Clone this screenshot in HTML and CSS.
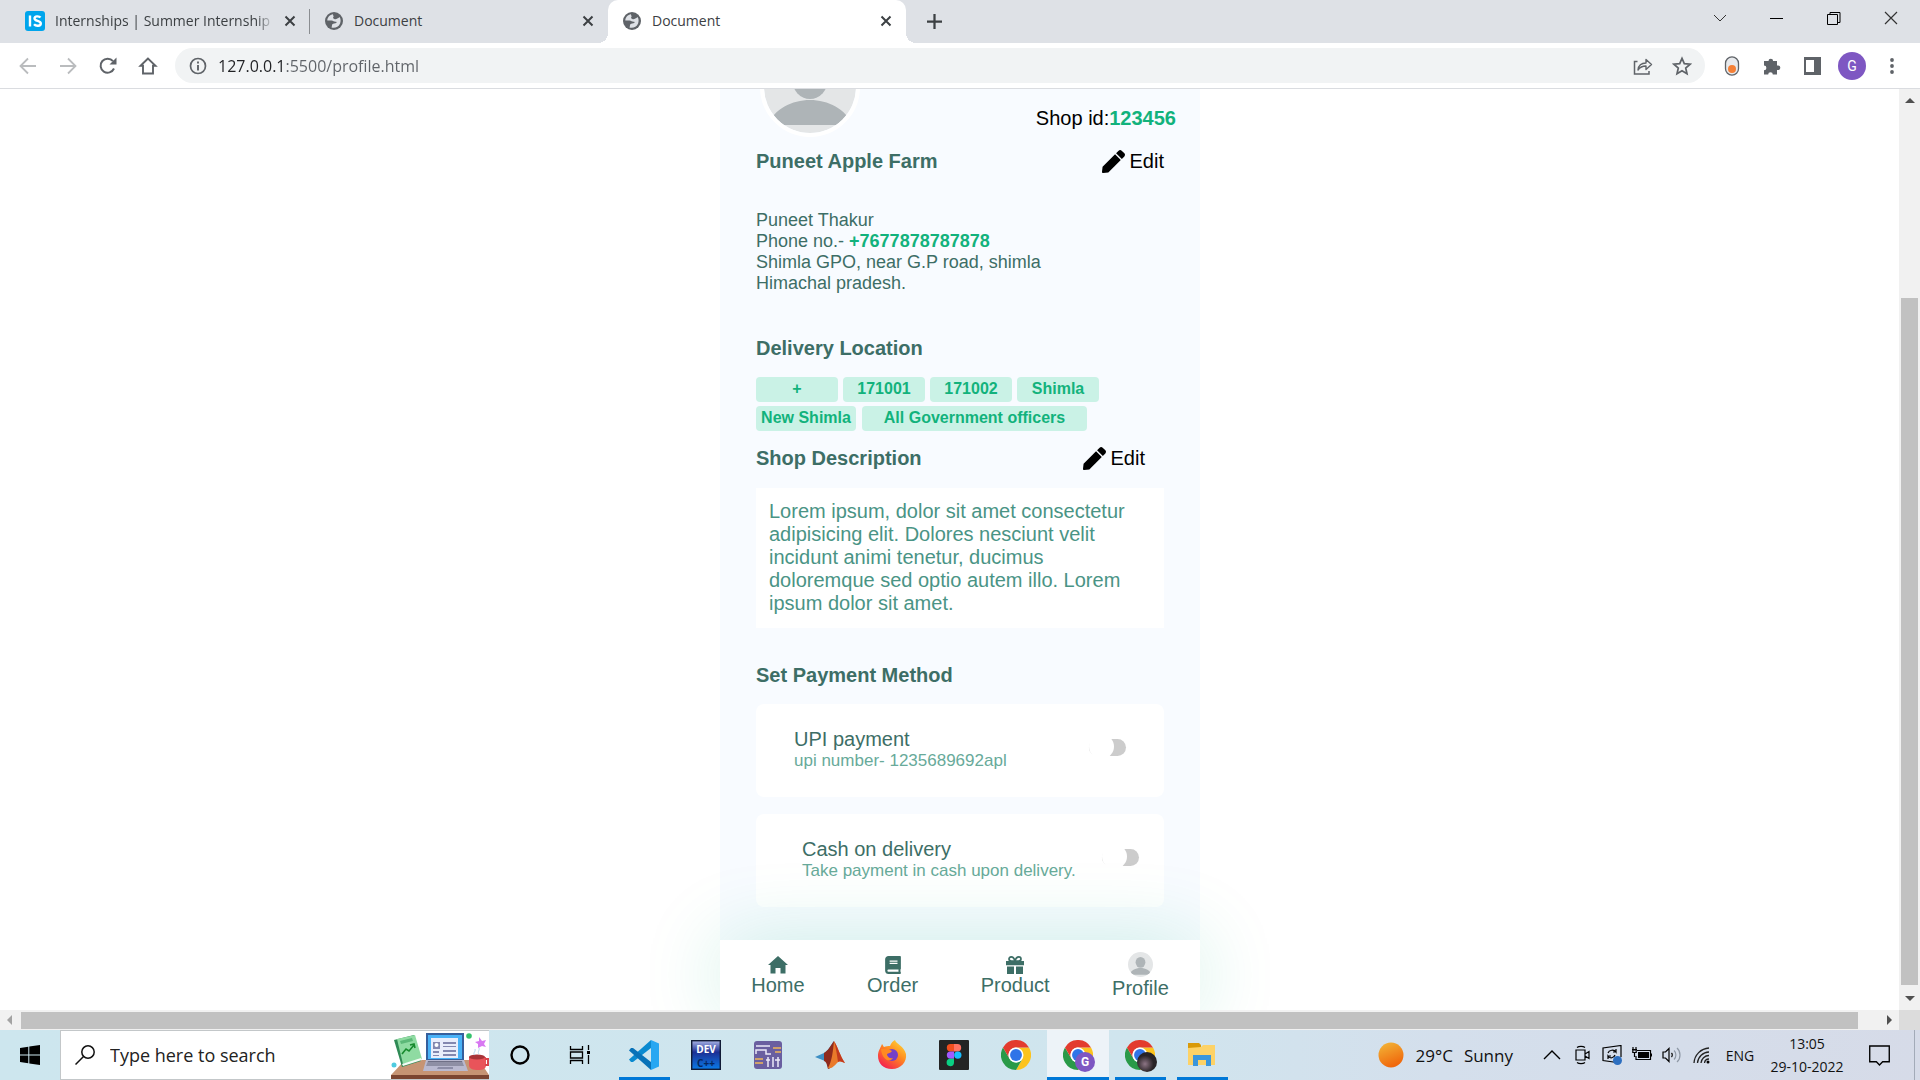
FILE: index.html
```html
<!DOCTYPE html>
<html lang="en">
<head>
<meta charset="utf-8">
<title>Document</title>
<link rel="stylesheet" href="styles.css">
</head>
<body>
<svg class="defs" aria-hidden="true">
  <symbol id="globe" viewBox="0 0 18 18"><circle cx="9" cy="9" r="9" fill="#5f6368"/><path d="M8 2.2c-3 .4-5.700 3-5.700 6.300l4.200.1c1.800.1 2.500 1.300 4.200 1.200 1 0 1.200.7.5 1.300-1 .7-3 .2-3.800 1.100-.6.7-.3 1.900-.9 3.200 3 1 7-.2 8.600-4 .9-2.300.6-4.700-.6-6.300-.6.9-1.600 1-2.200 1.500-.9.700-2 .9-3 .5-1.300-.5-1.600-1.500-.8-2.300.6-.6-.7-1.500-.5-2.600z" fill="#dee1e6"/></symbol>
  <symbol id="x" viewBox="0 0 12 12"><path d="M1.500 1.500l9 9M10.500 1.500l-9 9" stroke="#3c4043" stroke-width="2" fill="none"/></symbol>
  <symbol id="pen" viewBox="0 0 512 512"><path d="M290.74 93.24l128.02 128.02-277.99 277.99-114.14 12.6C11.35 513.54-1.56 500.620.14 485.340l12.7-114.22 277.9-277.880zm207.2-19.060l-60.110-60.110c-18.750-18.750-49.160-18.750-67.920 0l-56.550 56.550 128.020 128.020 56.550-56.550c18.750-18.760 18.750-49.160 0-67.910z"/></symbol>
  <symbol id="avatar" viewBox="4 4 92 92">
    <clipPath id="ring"><circle cx="50" cy="50" r="46"/></clipPath>
    <g clip-path="url(#ring)"><path d="M0 0h100v100H0z" fill="#e4e6e7"/><ellipse cx="50" cy="42" rx="18" ry="20" fill="#aeb4b7"/><path d="M8 88C14 72 32 63 50 63s36 9 42 25z" fill="#aeb4b7"/></g>
  </symbol>
  <symbol id="chrome" viewBox="0 0 48 48">
    <path d="M24 12h20.800A24 24 0 0 1 24 48l10.400-18z" fill="#fcc31e"/>
    <path d="M24 48A24 24 0 0 1 3.200 12l10.400 18A12 12 0 0 0 34.400 30z" fill="#2a9a48"/>
    <path d="M3.200 12A24 24 0 0 1 44.800 12H24A12 12 0 0 0 13.600 30z" fill="#e33b2e"/>
    <circle cx="24" cy="24" r="12" fill="#fff"/><circle cx="24" cy="24" r="9.500" fill="#2f74e8"/>
  </symbol>
</svg>

<header class="tabs">
  <div class="tab tab-first">
    <svg class="fav-is" viewBox="0 0 20 20" aria-hidden="true"><rect width="20" height="20" rx="3" fill="#00a5ec"/><path d="M5 4.500v11M15.500 6.500c-1.200-1.500-6-1.800-6 1 0 3 6.300 1.800 6.300 4.900 0 3-5 3-6.800.8" stroke="#fff" stroke-width="2.400" fill="none"/></svg>
    <span class="tab-title fade">Internships | Summer Internship 2022</span>
    <button class="close" aria-label="Close tab"><svg><use href="#x"/></svg></button>
  </div>
  <div class="tab">
    <svg class="fav"><use href="#globe"/></svg>
    <span class="tab-title">Document</span>
    <button class="close" aria-label="Close tab"><svg><use href="#x"/></svg></button>
  </div>
  <div class="tab active">
    <svg class="fav"><use href="#globe"/></svg>
    <span class="tab-title">Document</span>
    <button class="close" aria-label="Close tab"><svg><use href="#x"/></svg></button>
  </div>
  <button class="new-tab" aria-label="New tab"><svg viewBox="0 0 16 16"><path d="M8 0v16M0 8h16" stroke="#3c4043" stroke-width="2.400"/></svg></button>
  <div class="window-controls">
    <button aria-label="Search tabs"><svg viewBox="0 0 14 14"><path d="M1 4l6 6 6-6" fill="none" stroke="#333"/></svg></button>
    <button aria-label="Minimize"><svg viewBox="0 0 14 14"><path d="M0 7.500h13" stroke="#000"/></svg></button>
    <button aria-label="Restore"><svg viewBox="0 0 14 14"><path d="M.5 3.500h10v10H.5zM3 3V1.500h10v10h-2" fill="none" stroke="#000"/></svg></button>
    <button aria-label="Close"><svg viewBox="0 0 14 14"><path d="M1 1l12 12M13 1L1 13" stroke="#333" stroke-width="1.200"/></svg></button>
  </div>
</header>

<div class="toolbar">
  <button class="tool" aria-label="Back"><svg viewBox="0 0 20 20"><path d="M18 10H3M10 2.500L2.500 10l7.500 7.500" fill="none" stroke="#babcbe" stroke-width="1.800"/></svg></button>
  <button class="tool" aria-label="Forward"><svg viewBox="0 0 20 20"><path d="M2 10h15M10 2.500l7.500 7.500-7.500 7.500" fill="none" stroke="#babcbe" stroke-width="1.800"/></svg></button>
  <button class="tool" aria-label="Reload"><svg viewBox="0 0 20 20"><path d="M16 12.500A7 7 0 1 1 15 5.200" fill="none" stroke="#5f6368" stroke-width="2"/><path d="M18.500 1.500v7h-7z" fill="#5f6368"/></svg></button>
  <button class="tool" aria-label="Home"><svg viewBox="0 0 20 20"><path d="M10 2.500l-7.500 7.300H5V17.500h10V9.800h2.500z" fill="none" stroke="#5f6368" stroke-width="1.900"/></svg></button>
  <div class="omnibox">
    <svg viewBox="0 0 20 20" aria-hidden="true"><circle cx="10" cy="10" r="7.500" fill="none" stroke="#5f6368" stroke-width="1.700"/><path d="M10 9v5.500M10 5.500v2" stroke="#5f6368" stroke-width="1.900"/></svg>
    <input class="url" type="text" aria-label="Address" value="127.0.0.1:5500/profile.html">
    <button aria-label="Share"><svg viewBox="0 0 20 20"><path d="M4.500 5.500H1.500V18H16v-3" fill="none" stroke="#5f6368" stroke-width="1.500"/><path d="M5 14c.5-4.500 3.500-7 8-7V3.500l5.500 5-5.500 5V10c-3.500 0-6 1-8 4z" fill="none" stroke="#5f6368" stroke-width="1.400" stroke-linejoin="round"/></svg></button>
    <button aria-label="Bookmark"><svg viewBox="0 0 20 20"><path d="M10 2.300l2.300 5.400 5.800.5-4.400 3.800 1.300 5.700-5-3-5 3 1.300-5.700L1.900 8.200l5.800-.5z" fill="none" stroke="#5f6368" stroke-width="1.700"/></svg></button>
  </div>
  <button class="tool" aria-label="Extension"><svg viewBox="0 0 20 20"><rect x="3.500" y=".8" width="13" height="18.400" rx="6.500" fill="#e8eaed" stroke="#5f6368" stroke-width="1.300"/><circle cx="10" cy="13" r="4" fill="#f58036"/></svg></button>
  <button class="tool" aria-label="Extensions"><svg viewBox="0 0 20 20"><path d="M2 5h4.500a2.300 2.300 0 1 1 4.600 0H15v4.400h1a2.300 2.300 0 0 1 0 4.700h-1V18.500h-4.200a2.300 2.300 0 1 0-4.600 0H2v-4.200a2.400 2.400 0 0 0 0-4.800z" fill="#5f6368"/></svg></button>
  <button class="tool" aria-label="Side panel"><svg viewBox="0 0 20 20"><path d="M2 1h17v18H2z" fill="#5f6368"/><path d="M4 4h8v12H4z" fill="#fff"/></svg></button>
  <button class="tool" aria-label="Account"><span class="account">G</span></button>
  <button class="tool" aria-label="Menu"><svg viewBox="0 0 20 20"><circle cx="10" cy="4" r="1.900" fill="#5f6368"/><circle cx="10" cy="10" r="1.900" fill="#5f6368"/><circle cx="10" cy="16" r="1.900" fill="#5f6368"/></svg></button>
</div>

<div class="viewport">
  <div class="page">
    <main class="phone">
      <div class="shop-head">
        <svg class="photo"><use href="#avatar"/></svg>
        <p class="shop-id">Shop id:<b>123456</b></p>
      </div>
      <section class="content">
        <div class="row">
          <h2>Puneet Apple Farm</h2>
          <button class="edit"><svg><use href="#pen"/></svg>Edit</button>
        </div>
        <address>Puneet Thakur<br>Phone no.- <b>+7677878787878</b><br>Shimla GPO, near G.P road, shimla<br>Himachal pradesh.</address>
        <h2>Delivery Location</h2>
        <div class="chips">
          <button>+</button><button>171001</button><button>171002</button><button>Shimla</button>
        </div>
        <div class="chips second">
          <button class="mid">New Shimla</button><button class="wide">All Government officers</button>
        </div>
        <div class="row about">
          <h2>Shop Description</h2>
          <button class="edit"><svg><use href="#pen"/></svg>Edit</button>
        </div>
        <p class="description">Lorem ipsum, dolor sit amet consectetur adipisicing elit. Dolores nesciunt velit incidunt animi tenetur, ducimus doloremque sed optio autem illo. Lorem ipsum dolor sit amet.</p>
        <h2 class="payment">Set Payment Method</h2>
        <div class="card">
          <label for="upi"><span>UPI payment</span><small>upi number- 1235689692apl</small></label>
          <input class="switch" type="checkbox" id="upi">
        </div>
        <div class="card cash">
          <label for="cod"><span>Cash on delivery</span><small>Take payment in cash upon delivery.</small></label>
          <input class="switch" type="checkbox" id="cod">
        </div>
      </section>
    </main>
    <nav class="bottom-nav">
      <a href="#home"><svg viewBox="0 0 20 18"><path d="M10 0l10 9h-2.500v8.500h-5V12h-5v5.500h-5V9H0z"/></svg>Home</a>
      <a href="#order"><svg viewBox="0 0 448 512"><path d="M448 360V24c0-13.300-10.700-24-24-24H96C43 0 0 43 0 96v320c0 53 43 96 96 96h328c13.300 0 24-10.700 24-24v-16c0-7.500-3.500-14.300-8.900-18.700-4.200-15.400-4.200-59.300 0-74.700 5.400-4.300 8.900-11.100 8.900-18.600zM128 128h224v32H128zM128 192h224v32H128zm253.400 256H96a32 32 0 0 1 0-64h285.400c-1.900 17.100-1.900 46.900 0 64z" fill-rule="evenodd"/></svg>Order</a>
      <a href="#product"><svg viewBox="0 0 18 18"><path d="M9 4.800C8 2 7 .9 5.300.9 3.700.9 3 2 3 3c0 1.200 1 2 2.500 2H9zM9 4.800C10 2 11 .9 12.700.9c1.600 0 2.300 1.100 2.300 2.100 0 1.200-1 2-2.500 2H9z" fill="none" stroke="#3d6e66" stroke-width="1.700"/><path d="M0 5h18v4.200H0zM1 10.500h7V18H1zM10 10.500h7V18h-7z"/></svg>Product</a>
      <a href="#profile" class="me"><svg><use href="#avatar"/></svg>Profile</a>
    </nav>
  </div>
  <div class="vbar"><i class="up"></i><i class="vthumb"></i><i class="down"></i></div>
  <div class="hbar"><i class="left"></i><i class="hthumb"></i><i class="right"></i></div>
  <div class="corner"></div>
</div>

<footer class="taskbar">
  <button class="start" aria-label="Start"><svg viewBox="0 0 20 20"><path d="M0 3l8.300-1.200v7.700H0zM9.300 1.600L20 0v9.500H9.300zM0 10.500h8.300v7.700L0 17zM9.300 10.500H20V20L9.300 18.400z"/></svg></button>
  <div class="search">
    <svg class="lens" viewBox="0 0 20 20" aria-hidden="true"><circle cx="13" cy="7" r="6.200" fill="none" stroke="#111" stroke-width="1.500"/><path d="M8.500 11.500L.5 19.500" stroke="#111" stroke-width="1.500"/></svg>
    <input type="text" aria-label="Search" placeholder="Type here to search">
    <svg class="art" viewBox="0 0 98 47" aria-hidden="true">
      <path d="M14 28h74l10 15H0z" fill="#c69473"/><path d="M0 43h98v4H0z" fill="#7b4530"/>
      <path d="M3 8l20-5 7 26-19 6z" fill="#2f8a55"/><path d="M6 7l18-4 7 24-19 5z" fill="#8fdba2"/><path d="M9 9l12-3 1 3-12 3z" fill="#5cb878"/><path d="M11 22l4-5 3 2 5-6M19 13l4-1 1 4" stroke="#178a2e" stroke-width="1.600" fill="none"/><path d="M11 32l19-6 1 2-19 6z" fill="#f4fbf5"/>
      <path d="M35 1h38v28H35z" fill="#355f9d"/><path d="M37 3h34v24H37z" fill="#49b2f7"/><path d="M40 6h27v20H40z" fill="#e8edfb"/><path d="M42 10h7v7h-7zM42 19h6v2h-6zM42 23h6v1h-6zM52 10h13v2H52zM52 14h13v1H52zM52 18h13v2H52zM52 22h13v2H52z" fill="#8388b0"/><circle cx="45.500" cy="13" r="2" fill="#fff"/>
      <path d="M35 28h38l4 11H32z" fill="#b9b9cf"/><path d="M37 29h34l2 5H35z" fill="#6f7086"/><path d="M36 31h36M35 33h38" stroke="#c9c9dc" stroke-width=".7"/><path d="M47 35h15v2H46z" fill="#8c8da6"/>
      <path d="M78 25h17v8c0 4-3 5-8 5s-9-1-9-5z" fill="#e9545a"/><ellipse cx="86" cy="25" rx="8" ry="2.500" fill="#a83438"/><path d="M94 27h3v6h-3" stroke="#d8444b" stroke-width="2" fill="none"/><path d="M84 23c-3-2 1-3 0-6M88 22c-2-2 1-4 0-6" stroke="#b7d7ee" fill="none"/>
      <circle cx="78" cy="4" r="2.800" fill="#35c26c"/><circle cx="3" cy="33" r="2.500" fill="#4fcbe0"/><path d="M88 5l3 4 4-1-2 4 2 3-4-1-4 2v-4l-3-2 4-1z" fill="#d878f2"/>
    </svg>
  </div>
  <button class="app" aria-label="Cortana"><svg viewBox="0 0 30 30"><circle cx="15" cy="15" r="8.500" fill="none" stroke="#000" stroke-width="2.400"/></svg></button>
  <button class="app" aria-label="Task view"><svg viewBox="0 0 30 30"><path d="M3.500 6v3.500h12V6M3.500 24v-3.500h12V24M3.500 12h12v6h-12zM21.500 5v5M21.500 15v9" fill="none" stroke="#000" stroke-width="1.300"/><path d="M20 11h3v3h-3z"/></svg></button>
  <button class="app open" aria-label="Visual Studio Code"><svg viewBox="0 0 30 30"><path d="M22 0L0 19.500l2 2.500h2L22 8z" fill="#0a8ad0"/><path d="M22 30L0 10.500 2 8h2l18 14z" fill="#0872b8"/><path d="M22 0l8 3.500v23L22 30z" fill="#27a7f2"/></svg></button>
  <button class="app" aria-label="Dev-C++"><svg viewBox="0 0 30 30"><defs><linearGradient id="dev" x2="0" y2="1"><stop stop-color="#a9b4e6"/><stop offset=".4" stop-color="#1c2f94"/><stop offset="1" stop-color="#0a7be8"/></linearGradient></defs><rect x=".7" y=".7" width="28.600" height="28.600" fill="url(#dev)" stroke="#111b36" stroke-width="1.400"/><text class="dev" x="15" y="13" text-anchor="middle" fill="#fff">DEV</text><text class="dev" x="15" y="27" text-anchor="middle" fill="#05265e">C++</text></svg></button>
  <button class="app" aria-label="Circuit simulator"><svg viewBox="0 0 30 30"><rect x="1" y="1" width="28" height="28" rx="3" fill="#6a5fa0"/><path d="M3 6h14M3 14v-4h10v4h5M15 17v10M20 17v10M25 17v10M13 20h4M22 20h5" stroke="#eceaf7" stroke-width="1.500" fill="none"/><path d="M20 8h8M22 12h6M2 19h8M2 23h8" stroke="#efb65a" stroke-width="1.600"/></svg></button>
  <button class="app" aria-label="MATLAB"><svg viewBox="0 0 30 30"><path d="M0 17l9-4c4-2 7-8 10-12-1 9-4 15-9 20z" fill="#3d8fc4"/><path d="M9 13c4-2 7-8 10-12v24c-2 1-4 4-6 4-1-3-1-7-4-8z" fill="#8f2a1c"/><path d="M19 1c4 6 6 15 11 22-3-1-5-3-8 0-3 3-5 6-9 5 4-7 5-17 6-27z" fill="#e9792a"/><path d="M19 1c4 6 6 15 11 22-3-1-5-3-7-1-1-7-2-14-4-21z" fill="#c23a1e"/></svg></button>
  <button class="app" aria-label="Firefox"><svg viewBox="0 0 30 30"><defs><linearGradient id="fox" x1="1" x2=".3" y2="1"><stop stop-color="#ffe53b"/><stop offset=".5" stop-color="#ff8a1f"/><stop offset="1" stop-color="#f5224f"/></linearGradient></defs><path d="M5 4c1 1 1 2 2 3 2-1 4-1 6-1 1-3 3-5 5-6 1 4 9 6 11 14 1 8-5 15-14 15S1 23 1 16C1 11 3 9 5 4z" fill="url(#fox)"/><circle cx="15" cy="15" r="6" fill="#7540c8"/><path d="M4 9c4 0 8 0 11 2-1 2-4 2-5 3 0 3 3 5 6 4-3 5-11 2-12-9z" fill="#ff8a22"/></svg></button>
  <button class="app" aria-label="Figma"><svg viewBox="0 0 30 30"><rect width="30" height="30" rx="1" fill="#242424"/><path d="M15 4h-3.500a3.700 3.700 0 0 0 0 7.400H15z" fill="#f24e1e"/><path d="M15 4h3.500a3.700 3.700 0 0 1 0 7.400H15z" fill="#ff7262"/><path d="M15 11.400h-3.500a3.700 3.700 0 0 0 0 7.400H15z" fill="#a259ff"/><circle cx="18.800" cy="15.100" r="3.700" fill="#1abcfe"/><path d="M15 18.800h-3.500a3.700 3.700 0 1 0 3.500 3.700z" fill="#0acf83"/></svg></button>
  <button class="app" aria-label="Chrome"><svg><use href="#chrome"/></svg></button>
  <button class="app open current" aria-label="Chrome, profile G"><svg><use href="#chrome"/></svg><span class="badge">G</span></button>
  <button class="app open" aria-label="Chrome, second profile"><svg><use href="#chrome"/></svg><span class="badge pic"></span></button>
  <button class="app open" aria-label="File Explorer"><svg viewBox="0 0 30 30"><path d="M1 3h11l2 2v4H1z" fill="#d99a09"/><path d="M1 8l13-1 2-2h12v20H1z" fill="#fdd266"/><path d="M6 26V15h18v11h-5v-6h-8v6z" fill="#3a96dc"/></svg></button>

  <div class="tray">
    <button class="weather"><svg viewBox="0 0 26 26" aria-hidden="true"><defs><linearGradient id="sun" x2=".4" y2="1"><stop stop-color="#f2b93a"/><stop offset="1" stop-color="#f0680c"/></linearGradient></defs><circle cx="13" cy="13" r="12.500" fill="url(#sun)"/></svg><span>29°C</span><span>Sunny</span></button>
    <button class="mini" aria-label="Hidden icons"><svg viewBox="0 0 20 20"><path d="M2 14l8-8 8 8" fill="none" stroke="#000" stroke-width="1.400"/></svg></button>
    <button class="mini" aria-label="Camera"><svg viewBox="0 0 20 20"><path d="M4 5h9v10H4zM13 9l4-2.500v7L13 11M5 2.500c2-1.500 6-1.500 8 0M5 17.500c2 1.500 6 1.500 8 0" fill="none" stroke="#000" stroke-width="1.200"/></svg></button>
    <button class="mini" aria-label="Updates"><svg viewBox="0 0 20 20"><path d="M15 17.500l-14-2V3l18-2.500V12" fill="none" stroke="#000" stroke-width="1.200"/><path d="M6 8c1-3 6-4 8-1V4M14 7h-3M13 10c-1 3-5 4-7 1v3M6 11h3" fill="none" stroke="#000" stroke-width="1.200"/><circle cx="15.500" cy="15.500" r="4.500" fill="#2d6fc0"/></svg></button>
    <button class="mini" aria-label="Battery"><svg viewBox="0 0 20 20"><path d="M5 5.500h13.500v9H4V11M0 4.500h5M1 2v2.500M4 2v2.500M.8 5h3.400v2.500H.8zM2.500 7v5" fill="none" stroke="#000" stroke-width="1.200"/><path d="M6 7h11v6H6zM18.500 8.500h1.500v3h-1.500z"/></svg></button>
    <button class="mini" aria-label="Volume"><svg viewBox="0 0 20 20"><path d="M1 7h2.500L7 3.500v13L3.500 13H1z" fill="none" stroke="#000" stroke-width="1.200"/><path d="M9.500 8c1 1 1 3 0 4" fill="none" stroke="#000" stroke-width="1.200"/><path d="M12 5.500c2.500 2 2.500 7 0 9M15 3c4 3.500 4 10.500 0 14" fill="none" stroke="#8f99a6" stroke-width="1.200"/></svg></button>
    <button class="mini" aria-label="Network"><svg viewBox="0 0 20 20"><path d="M2 18A16 16 0 0 1 17 3M5.500 18A12 12 0 0 1 17 7M9 18a8 8 0 0 1 8-7.500M12.500 18a4.500 4.500 0 0 1 4.500-4" fill="none" stroke="#222" stroke-width="1.300"/><circle cx="16" cy="17" r="1.500"/></svg></button>
    <button class="lang">ENG</button>
    <button class="clock"><span>13:05</span><span>29-10-2022</span></button>
    <button class="notes" aria-label="Notifications"><svg viewBox="0 0 20 20"><path d="M.7 1h18.600v15H13l-3 3-3-3H.7z" fill="none" stroke="#000" stroke-width="1.300"/></svg></button>
    <button class="desktop" aria-label="Show desktop"></button>
  </div>
</footer>
</body>
</html>
```

FILE: styles.css
```css
* { box-sizing: border-box; }
body {
  margin: 0;
  height: 100vh;
  display: flex;
  flex-direction: column;
  overflow: hidden;
  background: #fff;
  font-family: "Open Sans", sans-serif;
}
button, input { font: inherit; color: inherit; border: 0; padding: 0; background: none; }
button { display: flex; align-items: center; justify-content: center; }
svg { display: block; flex: none; }
.defs { position: absolute; width: 0; height: 0; }

/* Tab strip */
.tabs { display: flex; height: 43px; background: #dee1e6; color: #3c4043; font-size: 14px; }
.tab { display: flex; align-items: center; width: 298px; padding: 0 14px 2px 15px; gap: 11px; }
.tab-first { width: 310px; padding: 0 14px 2px 25px; gap: 10px; position: relative; }
.tab-first::after { content: ""; position: absolute; right: 0; top: 9px; width: 1px; height: 25px; background: #8a8d91; }
.tab-title { flex: 1; min-width: 0; white-space: nowrap; overflow: hidden; }
.fade { -webkit-mask-image: linear-gradient(90deg, #000 92%, transparent); mask-image: linear-gradient(90deg, #000 92%, transparent); }
.fav-is { width: 20px; height: 20px; }
.fav { width: 18px; height: 18px; }
.close svg { width: 12px; height: 12px; }
.active { position: relative; background: #fff; border-radius: 10px 10px 0 0; }
.active::before, .active::after { content: ""; position: absolute; bottom: 0; width: 10px; height: 10px; }
.active::before { left: -10px; background: radial-gradient(circle at 0 0, transparent 10px, #fff 10px); }
.active::after { right: -10px; background: radial-gradient(circle at 100% 0, transparent 10px, #fff 10px); }
.new-tab { width: 56px; padding-bottom: 1px; }
.new-tab svg { width: 15px; height: 15px; }
.window-controls { display: flex; margin-left: auto; padding-right: 1px; }
.window-controls button { width: 57px; padding-bottom: 7px; }
.window-controls svg { width: 14px; height: 14px; }

/* Toolbar */
.toolbar { display: flex; align-items: center; height: 46px; padding: 0 8px; border-bottom: 1px solid #dadce0; }
.tool { width: 40px; height: 40px; }
.tool svg, .omnibox svg { width: 20px; height: 20px; }
.omnibox { flex: 1; display: flex; align-items: center; height: 35px; margin: 0 7px; padding: 0 13px; gap: 10px; border-radius: 18px; background: #f1f3f4; }
.omnibox button + button { margin-left: 9px; }
.url {
  flex: 1;
  min-width: 0;
  font-size: 16px;
  color: #5f6368;
  -webkit-text-fill-color: transparent;
  background: linear-gradient(90deg, #202124 66px, #5f6368 66px);
  -webkit-background-clip: text;
  background-clip: text;
}
.account { width: 28px; height: 28px; border-radius: 50%; background: #7e57c2; color: #fff; font: 14px/28px Roboto, sans-serif; text-align: center; }

/* Viewport with scrollbars */
.viewport { flex: 1; min-height: 0; display: grid; grid-template: minmax(0, 1fr) 20px / minmax(0, 1fr) 21px; }
.page { display: flex; flex-direction: column; align-items: center; overflow: hidden; padding-left: 21px; font-family: "Liberation Sans", Arial, sans-serif; }
.vbar { display: flex; flex-direction: column; align-items: center; background: #f1f1f1; padding: 9px 0; }
.hbar { display: flex; align-items: center; background: #f1f1f1; padding: 0 7px; }
.corner { background: #dcdcdc; }
.up, .down { border: 5px solid transparent; }
.up { border-top: 0; border-bottom-color: #505050; }
.down { border-bottom: 0; border-top-color: #505050; }
.vthumb { flex: 1; width: 17px; margin: 195px 0 11px; background: #c1c1c1; }
.left, .right { border: 5px solid transparent; }
.left { border-left: 0; border-right-color: #a3a3a3; }
.right { border-right: 0; border-left-color: #505050; }
.hthumb { flex: 1; height: 17px; margin: 0 29px 0 9px; background: #c1c1c1; }

/* Shop profile */
.phone { flex: 1; min-height: 0; overflow: hidden; width: 480px; max-width: 100%; background: #f8fbff; color: #3d6e66; }
.phone b { color: #12b27c; }
.shop-head { display: flex; justify-content: space-between; align-items: flex-end; margin-top: -52px; padding: 0 24px 0 40px; }
.photo { width: 100px; height: 100px; border: 4px solid #fff; border-radius: 50%; }
.shop-id { margin: 0 0 7px; font-size: 20px; line-height: 23px; color: #000; }
.content { padding: 12px 36px 0; }
h2 { margin: 0; font-size: 20px; line-height: 23px; }
.row { display: flex; justify-content: space-between; align-items: center; height: 24px; }
.edit { gap: 5px; font-size: 20px; line-height: 23px; color: #000; }
.edit svg { width: 23px; height: 23px; }
address { margin: 37px 0 43px; font-style: normal; font-size: 18px; line-height: 21px; }
.chips { display: flex; gap: 5px; margin-top: 17px; }
.chips button { width: 82px; height: 25px; padding-bottom: 2px; border-radius: 4px; background: #caf2e6; color: #12b27c; font-size: 16px; font-weight: 700; white-space: nowrap; }
.chips.second { margin-top: 4px; gap: 6px; }
.chips .mid { width: 100px; }
.chips .wide { width: 225px; }
.about { margin: 15px 0 18px; padding-right: 19px; }
.description { margin: 0 0 36px; padding: 12px 13px 13px; background: #fff; color: #4a9485; font-size: 20px; line-height: 23px; }
.payment { margin-bottom: 17px; }
.card { display: flex; justify-content: space-between; align-items: flex-start; padding: 24px 38px 26px; border-radius: 8px; background: #fff; }
.cash { margin-top: 17px; padding: 24px 25px 26px 46px; }
.card span, .card small { display: block; }
.card span { font-size: 20px; line-height: 23px; }
.card small { font-size: 17px; line-height: 20px; color: #68aa9a; }
.switch { appearance: none; position: relative; width: 37px; height: 17px; margin: 11px 0 0; border-radius: 9px; background: #ccc; }
.switch::before { content: ""; position: absolute; left: 0; top: -5px; width: 25px; height: 25px; border-radius: 50%; background: #fff; }

.bottom-nav { position: relative; display: flex; justify-content: space-around; align-items: center; width: 480px; max-width: 100%; height: 70px; padding-top: 2px; background: #fff; box-shadow: 0 0 80px rgba(18, 178, 124, .2); }
.bottom-nav a { display: flex; flex-direction: column; align-items: center; color: #3d6e66; font-size: 20px; line-height: 23px; text-decoration: none; }
.bottom-nav svg { width: 20px; height: 18px; fill: #3d6e66; }
.bottom-nav .me svg { width: 25px; height: 25px; }

/* Taskbar */
.taskbar { display: flex; height: 50px; background: linear-gradient(90deg, #cde6ee, #d0e5ee 60%, #d4dfec 75%, #d6dbe8); color: #111; }
.start { width: 60px; }
.start svg { width: 20px; height: 20px; }
.search { display: flex; align-items: center; width: 429px; padding-left: 14px; gap: 15px; border: 1px solid #c3c7c9; border-right: 0; background: #fff; }
.lens { width: 20px; height: 20px; }
.search input { flex: 1; min-width: 0; font-size: 18px; }
.search input::placeholder { color: #222; opacity: 1; }
.art { width: 98px; height: 47px; align-self: flex-end; }
.app { position: relative; width: 62px; }
.app svg { width: 30px; height: 30px; }
.app.open::after { content: ""; position: absolute; left: 6px; right: 5px; bottom: 0; height: 3px; background: #0078d7; }
.app.current { background: #edf3f8; }
.app.current::after { left: 0; right: 0; }
.badge { position: absolute; left: 28px; top: 22px; width: 20px; height: 20px; border-radius: 50%; background: #7e57c2; color: #fff; font: 700 12px/20px Roboto, sans-serif; }
.badge.pic { background: radial-gradient(circle at 40% 60%, #8d7585, #2a2427 50%, #222); }
.dev { font: 700 10px "Open Sans", sans-serif; }
.tray { display: flex; margin-left: auto; }
.weather { gap: 11px; margin-right: 24px; font-size: 17px; }
.weather svg { width: 26px; height: 26px; }
.mini { width: 30px; }
.mini svg { width: 20px; height: 20px; }
.lang { width: 46px; font-size: 14px; }
.clock { flex-direction: column; width: 88px; font-size: 14px; line-height: 23px; }
.notes { width: 56px; }
.notes svg { width: 21px; height: 21px; }
.desktop { width: 6px; margin-left: 7px; border-left: 1px solid #a3abb8; }
```
